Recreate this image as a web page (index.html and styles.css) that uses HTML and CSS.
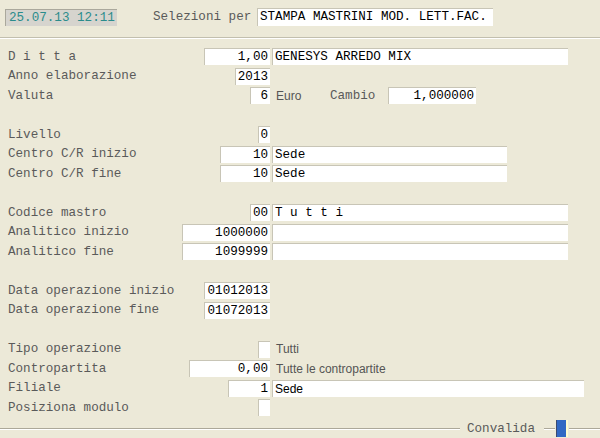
FILE: index.html
```html
<!DOCTYPE html>
<html lang="it">
<head>
  <meta charset="UTF-8">
  <title>Stampa mastrini</title>
  <link rel="stylesheet" href="styles.css">
</head>
<body>

  <div class="head">
    <div class="clock">25.07.13 12:11</div>
    <span class="head-label">Selezioni per</span>
    <div class="fld title">STAMPA MASTRINI MOD. LETT.FAC.</div>
  </div>
  <div class="sep"></div>

  <div class="form">
    <div class="row">
      <div class="left"><span class="lbl">D i t t a</span><div class="fld num w66">1,00</div></div>
      <div class="fld txt w296">GENESYS ARREDO MIX</div>
    </div>
    <div class="row">
      <div class="left"><span class="lbl">Anno elaborazione</span><div class="fld num w35">2013</div></div>
    </div>
    <div class="row">
      <div class="left"><span class="lbl">Valuta</span><div class="fld num w20">6</div></div>
      <span class="note w54">Euro</span>
      <span class="lbl cambio">Cambio</span>
      <div class="fld num w88">1,000000</div>
    </div>
    <div class="row"></div>

    <div class="row">
      <div class="left"><span class="lbl">Livello</span><div class="fld num w12">0</div></div>
    </div>
    <div class="row">
      <div class="left"><span class="lbl">Centro C/R inizio</span><div class="fld num w50">10</div></div>
      <div class="fld txt w235">Sede</div>
    </div>
    <div class="row">
      <div class="left"><span class="lbl">Centro C/R fine</span><div class="fld num w50">10</div></div>
      <div class="fld txt w235">Sede</div>
    </div>
    <div class="row"></div>

    <div class="row">
      <div class="left"><span class="lbl">Codice mastro</span><div class="fld num w20">00</div></div>
      <div class="fld txt w296">T u t t i</div>
    </div>
    <div class="row">
      <div class="left"><span class="lbl">Analitico inizio</span><div class="fld num w88">1000000</div></div>
      <div class="fld txt w296"></div>
    </div>
    <div class="row">
      <div class="left"><span class="lbl">Analitico fine</span><div class="fld num w88">1099999</div></div>
      <div class="fld txt w296"></div>
    </div>
    <div class="row"></div>

    <div class="row">
      <div class="left"><span class="lbl">Data operazione inizio</span><div class="fld num w66">01012013</div></div>
    </div>
    <div class="row">
      <div class="left"><span class="lbl">Data operazione fine</span><div class="fld num w66">01072013</div></div>
    </div>
    <div class="row"></div>

    <div class="row">
      <div class="left"><span class="lbl">Tipo operazione</span><div class="fld num w12"></div></div>
      <span class="note">Tutti</span>
    </div>
    <div class="row">
      <div class="left"><span class="lbl">Contropartita</span><div class="fld num w81">0,00</div></div>
      <span class="note">Tutte le contropartite</span>
    </div>
    <div class="row">
      <div class="left"><span class="lbl">Filiale</span><div class="fld num w42">1</div></div>
      <div class="fld txt sans w312">Sede</div>
    </div>
    <div class="row">
      <div class="left"><span class="lbl">Posiziona modulo</span><div class="fld num w12"></div></div>
    </div>
  </div>

  <div class="foot">
    <div class="line"></div>
    <span class="lbl ok">Convalida</span>
    <div class="line short"></div>
    <div class="btn"></div>
    <div class="line end"></div>
  </div>

</body>
</html>
```

FILE: styles.css
```css
body {
  margin: 0;
  background-color: #ece9d8;
  font-family: "Liberation Mono", "DejaVu Sans Mono", monospace;
  font-size: 12.6px;
  color: #000;
  width: 600px;
  height: 438px;
  overflow: hidden;
}

/* intestazione */
.head {
  display: flex;
  align-items: center;
  height: 18px;
  padding: 8px 0 0 5px;
}

.clock {
  width: 112px;
  height: 17px;
  line-height: 17px;
  padding-left: 3px;
  background-color: #d6d4ce;
  color: #2b8c8c;
  border-top: 1px solid #aaa89c;
  border-left: 1px solid #aaa89c;
  box-sizing: border-box;
}

.head-label {
  color: #5a5a5a;
  margin-left: 36px;
  width: 104px;
}

.fld {
  height: 17px;
  line-height: 17px;
  background-color: #fff;
  border-top: 1px solid #c8c5b6;
  border-left: 1px solid #c8c5b6;
  box-sizing: border-box;
  white-space: pre;
  overflow: hidden;
}

.title {
  width: 236px;
  height: 18px;
  padding-left: 2px;
}

.sep {
  margin-top: 11px;
  border-top: 1px solid #c2bfae;
  border-bottom: 1px solid #fff;
}

/* righe del modulo */
.form {
  margin-top: 8px;
}

.row {
  display: flex;
  align-items: center;
  height: 19.5px;
}

.left {
  display: flex;
  align-items: center;
  width: 270px;
  padding-left: 8px;
  box-sizing: border-box;
  margin-right: 2px;
}

.lbl {
  color: #5a5a5a;
  white-space: pre;
}

.left .fld {
  margin-left: auto;
}

.num {
  text-align: right;
  padding-right: 2px;
}

.txt {
  padding-left: 2px;
}

.sans {
  font-family: "Liberation Sans", Arial, sans-serif;
  font-size: 12px;
}

.note {
  font-family: "Liberation Sans", Arial, sans-serif;
  font-size: 12px;
  color: #555;
  margin-left: 4px;
}

.cambio {
  width: 58px;
}

.w12 { width: 12px; }
.w20 { width: 20px; }
.w35 { width: 35px; }
.w42 { width: 42px; }
.w50 { width: 50px; }
.w54 { width: 54px; }
.w66 { width: 66px; }
.w81 { width: 81px; }
.w88 { width: 88px; }
.w235 { width: 235px; }
.w296 { width: 296px; }
.w312 { width: 312px; }

/* piede */
.foot {
  display: flex;
  align-items: center;
  height: 17px;
  margin-top: 2.5px;
}

.line {
  flex: 1;
  border-top: 1px solid #aca899;
  border-bottom: 1px solid #fff;
}

.line.short {
  flex: none;
  width: 11px;
}

.line.end {
  flex: none;
  width: 31px;
}

.ok {
  margin: 0 9px 0 7px;
}

.btn {
  width: 12px;
  height: 17px;
  box-sizing: border-box;
  background-color: #3168c4;
  border-left: 1px solid #3a4a70;
  border-right: 2px solid #fffbd0;
  margin: 0 1px;
}
```
